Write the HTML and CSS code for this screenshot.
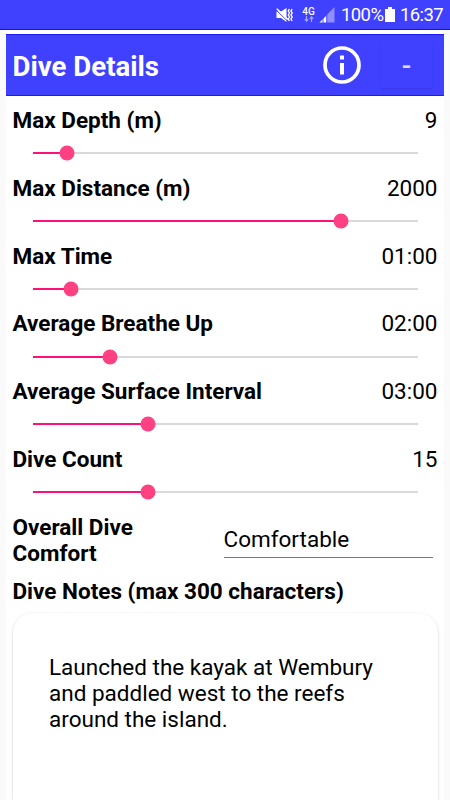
FILE: index.html
```html
<!DOCTYPE html>
<html lang="en">
<head>
  <meta charset="UTF-8">
  <meta name="viewport" content="width=device-width, initial-scale=1.0">
  <title>Dive Details</title>
  <link rel="stylesheet" href="styles.css">
</head>
<body>
  <div class="status-bar">
    <svg class="mute-icon" width="18" height="16" viewBox="0 0 18 16">
      <path d="M0.500 4.500h4.500l5.500-3.500v14l-5.500-4h-4.500z" fill="#fff"/>
      <path d="M0 3l11 10.500" stroke="#4040ff" stroke-width="1"/>
      <path d="M0.800 1.800l11 10.700" stroke="#fff" stroke-width="1.600"/>
      <path d="M13.300 2l-1 2 1.200 2-1.200 2 1.200 2-1.200 2 1 2M16 2l-1 2 1.200 2-1.200 2 1.200 2-1.200 2 1 2" fill="none" stroke="#fff" stroke-width="1.400"/>
    </svg>
    <div class="network">
      <span>4G</span>
      <svg width="10" height="6" viewBox="0 0 10 6">
        <path d="M2.500 0v5M0.800 3.200l1.700 2 1.700-2M7.500 6V1M5.800 2.800l1.700-2 1.700 2" fill="none" stroke="#a6a6ff" stroke-width="1.200"/>
      </svg>
    </div>
    <svg class="signal-icon" width="16" height="16" viewBox="0 0 16 16">
      <path d="M7.500 8L15.500 0v15.500h-8z" fill="#8f8fff"/>
      <path d="M0.500 15.500L7.500 8.500v7z" fill="#fff"/>
      <path d="M4 10v6M7.800 7v9" stroke="#4040ff" stroke-width="0.900"/>
    </svg>
    <span class="status-text battery-level">100%</span>
    <svg class="battery-icon" width="10" height="15" viewBox="0 0 10 15">
      <path d="M3 0h4v2h3v13H0V2h3z" fill="#fff"/>
    </svg>
    <span class="status-text clock">16:37</span>
  </div>

  <div class="container">
    <div class="header">
      <h1>Dive Details</h1>
      <svg class="info-icon" width="38" height="38" viewBox="0 0 38 38">
        <circle cx="19" cy="19" r="17" fill="none" stroke="#fff" stroke-width="3.700"/>
        <path d="M17 9.500h4v4h-4zM17 17h4v11.500h-4z" fill="#fff"/>
      </svg>
      <button class="collapse-btn">-</button>
    </div>

    <div class="details">
      <div class="row">
        <div class="row-text"><label>Max Depth (m)</label><span>9</span></div>
        <div class="slider"><div class="fill" style="width: 9%"></div></div>
      </div>
      <div class="row">
        <div class="row-text"><label>Max Distance (m)</label><span>2000</span></div>
        <div class="slider"><div class="fill" style="width: 80%"></div></div>
      </div>
      <div class="row">
        <div class="row-text"><label>Max Time</label><span>01:00</span></div>
        <div class="slider"><div class="fill" style="width: 10%"></div></div>
      </div>
      <div class="row">
        <div class="row-text"><label>Average Breathe Up</label><span>02:00</span></div>
        <div class="slider"><div class="fill" style="width: 20%"></div></div>
      </div>
      <div class="row">
        <div class="row-text"><label>Average Surface Interval</label><span>03:00</span></div>
        <div class="slider"><div class="fill" style="width: 30%"></div></div>
      </div>
      <div class="row">
        <div class="row-text"><label>Dive Count</label><span>15</span></div>
        <div class="slider"><div class="fill" style="width: 30%"></div></div>
      </div>

      <div class="comfort">
        <label>Overall Dive Comfort</label>
        <div class="comfort-value">Comfortable</div>
      </div>

      <label class="notes-label">Dive Notes (max 300 characters)</label>
      <div class="notes">Launched the kayak at Wembury and paddled west to the reefs around the island.</div>
    </div>
  </div>
</body>
</html>
```

FILE: styles.css
```css
body {
  margin: 0;
  height: 800px;
  display: flex;
  flex-direction: column;
  overflow: hidden;
  font-family: Roboto, sans-serif;
  font-size: 22.5px;
  line-height: 26.4px;
  color: #000;
  background-color: #fafafa;
}
.status-bar {
  box-sizing: border-box;
  height: 30px;
  flex-shrink: 0;
  padding-right: 8px;
  display: flex;
  justify-content: flex-end;
  align-items: center;
  background-color: #4040ff;
  border-bottom: 1px solid #0f0fff;
  color: #fff;
}
.mute-icon {
  margin-right: 8px;
}
.network {
  width: 13px;
  margin-right: 4px;
  display: flex;
  flex-direction: column;
  align-items: center;
  font-size: 10px;
  line-height: 9px;
  font-weight: 500;
}
.signal-icon {
  margin-right: 6px;
}
.status-text {
  font-size: 18.5px;
  line-height: 30px;
  letter-spacing: -0.6px;
  padding-top: 1px;
}
.battery-level {
  width: 41px;
  margin-right: 3px;
}
.battery-icon {
  margin-right: 5px;
}
.clock {
  width: 42px;
}
.container {
  flex: 1;
  margin: 0 6px;
  padding-top: 4px;
  display: flex;
  flex-direction: column;
  background-color: #fff;
}
.header {
  box-sizing: border-box;
  height: 62px;
  padding: 0 12px 0 6.5px;
  display: flex;
  align-items: center;
  background-color: #4040ff;
  border: 1px solid #1a1aff;
  border-width: 1px 0;
}
.header h1 {
  flex: 1;
  margin: 3px 0 0;
  font-size: 27.6px;
  line-height: 34px;
  font-weight: 700;
  color: #fff;
}
.info-icon {
  margin-right: 20px;
}
.collapse-btn {
  width: 51px;
  height: 46px;
  padding: 0;
  border: none;
  border-radius: 2px;
  background-color: #4040ff;
  box-shadow: 0 1px 2px rgba(0, 0, 0, 0.1);
  font-family: inherit;
  font-size: 28px;
  font-weight: 500;
  color: #d9d9ff;
}
.details {
  flex: 1;
  display: flex;
  flex-direction: column;
  padding: 11px 6.5px 0;
}
.details label {
  font-weight: 700;
}
.row {
  height: 67.8px;
}
.row-text {
  display: flex;
  justify-content: space-between;
}
.slider {
  height: 2px;
  margin: 18.8px 20px 0;
  background-color: #d9d9d9;
}
.fill {
  position: relative;
  height: 100%;
  background-color: #ff0f78;
}
/* thumb */
.fill::after {
  content: "";
  position: absolute;
  top: 50%;
  right: 0;
  width: 15px;
  height: 15px;
  border-radius: 50%;
  background-color: #ff4081;
  transform: translate(50%, -50%);
}
.comfort {
  display: flex;
  justify-content: space-between;
  align-items: center;
}
.comfort label {
  width: 160px;
}
.comfort-value {
  width: 209px;
  margin: 4px 5px 0 0;
  padding-bottom: 4px;
  border-bottom: 1px solid #777;
}
.notes-label {
  margin-top: 11px;
}
.notes {
  flex: 1;
  margin-top: 9px;
  padding: 40.5px 50px 0 36.5px;
  border-radius: 20px 20px 0 0;
  box-shadow: 0 1px 3px rgba(0, 0, 0, 0.2);
}
```
